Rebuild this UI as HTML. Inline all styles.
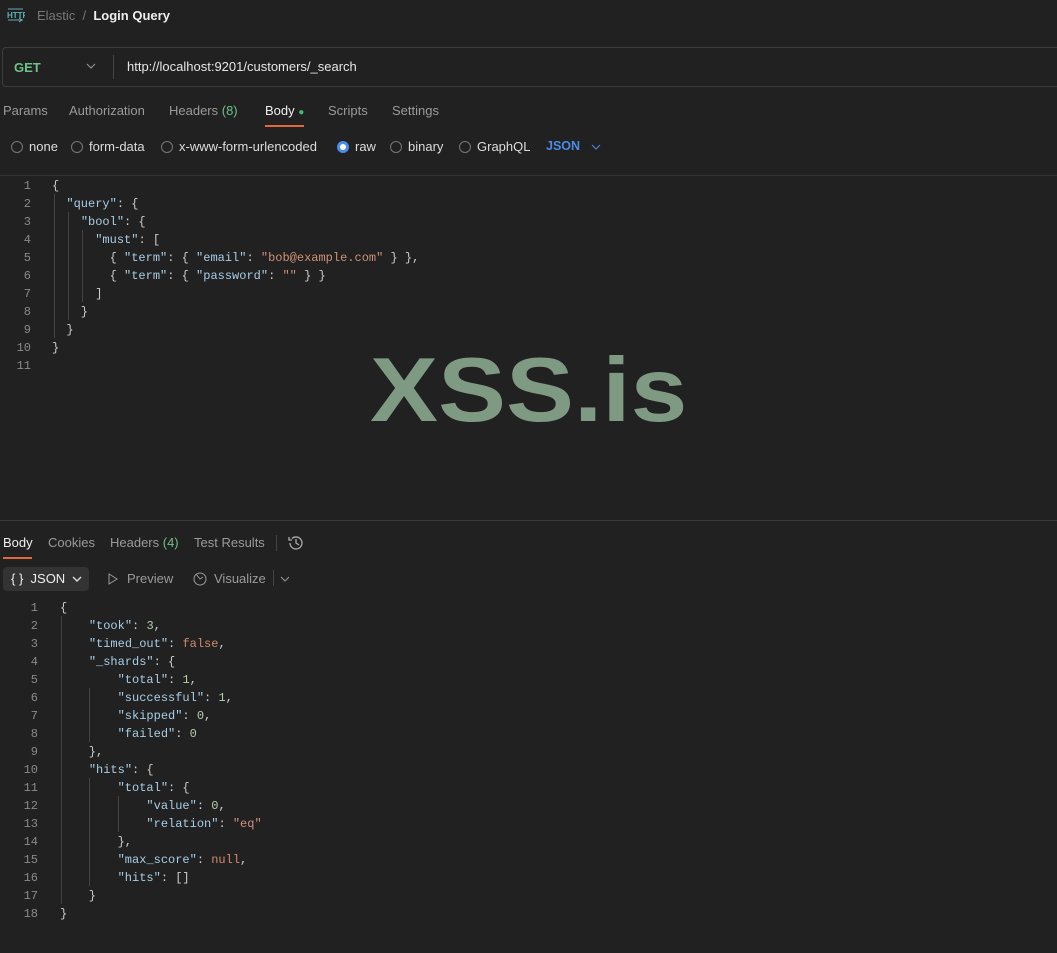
<!DOCTYPE html>
<html><head><meta charset="utf-8"><style>
body{margin:0;width:1057px;height:953px;background:#212121;font-family:"Liberation Sans",sans-serif;color:#cfcfcf;position:relative;overflow:hidden}
.a{position:absolute;white-space:pre}
.m{font-family:"Liberation Mono",monospace;font-size:12px}
.ln{color:#8a8a8a;text-align:right;width:22px}
.k{color:#a9cde6}.s{color:#ce9178}.n{color:#b5cea8}.p{color:#cccccc}.b{color:#d08a6a}
.t{font-size:13px;color:#9a9a9a}
.g{position:absolute;width:1px;background:#444}
.rb{position:absolute;top:139px;font-size:13px;color:#ddd}
.r{display:inline-block;width:12px;height:12px;border:1px solid #777;border-radius:50%;vertical-align:-2px;margin-right:6px;box-sizing:border-box}
</style></head><body>
<svg class="a" style="left:7px;top:7px" width="18" height="16" viewBox="0 0 18 16"><text x="0" y="11" font-size="8" fill="#5fb0b7" font-family="Liberation Sans" font-weight="bold">HTTP</text><path d="M1 13h15M12 11l3 2-3 2" stroke="#5fb0b7" fill="none"/><path d="M1 2h15" stroke="#5fb0b7"/></svg>
<div class="a" style="left:37px;top:8px;font-size:13px;color:#777">Elastic&nbsp; /&nbsp; <span style="color:#eee;font-weight:bold">Login Query</span></div>
<div class="a" style="left:2px;top:47px;width:1060px;height:40px;border:1px solid #3c3c3c;border-radius:4px;box-sizing:border-box"></div>
<div class="a" style="left:14px;top:60px;font-size:13px;color:#6cc08a;font-weight:bold">GET</div>
<svg class="a" style="left:86px;top:62px" width="10" height="8"><path d="M1 2l4 4 4-4" stroke="#999" fill="none"/></svg>
<div class="g" style="left:113px;top:55px;height:24px"></div>
<div class="a" style="left:127px;top:59px;font-size:13px;color:#e6e6e6">http://localhost:9201/customers/_search</div>
<div class="a t" style="left:3px;top:103px">Params</div>
<div class="a t" style="left:69px;top:103px">Authorization</div>
<div class="a t" style="left:169px;top:103px">Headers <span style="color:#6cc08a">(8)</span></div>
<div class="a t" style="left:265px;top:103px;color:#eee">Body <span style="color:#3fbf6a;font-size:10px">●</span></div>
<div class="a" style="left:265px;top:125px;width:39px;height:2px;background:#e0683c"></div>
<div class="a t" style="left:328px;top:103px">Scripts</div>
<div class="a t" style="left:392px;top:103px">Settings</div>
<div class="rb" style="left:11px"><span class="r"></span>none</div>
<div class="rb" style="left:71px"><span class="r"></span>form-data</div>
<div class="rb" style="left:161px"><span class="r"></span>x-www-form-urlencoded</div>
<div class="rb" style="left:337px"><span class="r" style="border:3px solid #4a8ce8;background:#fff"></span>raw</div>
<div class="rb" style="left:390px"><span class="r"></span>binary</div>
<div class="rb" style="left:459px"><span class="r"></span>GraphQL</div>
<div class="rb" style="left:546px;color:#4a8ce8;font-weight:bold;font-size:12.5px">JSON</div>
<svg class="a" style="left:591px;top:143px" width="10" height="8"><path d="M1 2l4 4 4-4" stroke="#4a8ce8" fill="none"/></svg>
<div class="a" style="left:0;top:175px;width:1057px;height:1px;background:#333"></div>
<div class="a m ln" style="left:9px;top:177px;line-height:18px">1
2
3
4
5
6
7
8
9
10
11</div>
<div class="g" style="left:54px;top:194px;height:144px"></div>
<div class="g" style="left:68px;top:212px;height:108px"></div>
<div class="g" style="left:82px;top:230px;height:72px"></div>
<div class="a m p" style="left:52px;top:177px;line-height:18px">{
  <span class="k">"query"</span>: {
    <span class="k">"bool"</span>: {
      <span class="k">"must"</span>: [
        { <span class="k">"term"</span>: { <span class="k">"email"</span>: <span class="s">"bob@example.com"</span> } },
        { <span class="k">"term"</span>: { <span class="k">"password"</span>: <span class="s">""</span> } }
      ]
    }
  }
}</div>
<div class="a" style="left:370px;top:339px;font-size:91px;font-weight:bold;color:#7f9a82;transform:scaleX(1.12);transform-origin:0 0">XSS.is</div>
<div class="a" style="left:0;top:520px;width:1057px;height:1px;background:#3a3a3a"></div>
<div class="a t" style="left:3px;top:535px;color:#eee">Body</div>
<div class="a" style="left:3px;top:557px;width:29px;height:2px;background:#e0683c"></div>
<div class="a t" style="left:48px;top:535px">Cookies</div>
<div class="a t" style="left:110px;top:535px">Headers <span style="color:#6cc08a">(4)</span></div>
<div class="a t" style="left:194px;top:535px">Test Results</div>
<div class="g" style="left:276px;top:535px;height:16px"></div>
<svg class="a" style="left:287px;top:534px" width="18" height="18" viewBox="0 0 18 18"><path d="M3 9a6 6 0 1 0 2-4.5M2 3v3h3M9 5v4l3 2" stroke="#aaa" fill="none" stroke-width="1.3"/></svg>
<div class="a" style="left:3px;top:567px;width:86px;height:24px;background:#333;border-radius:4px"></div>
<div class="a" style="left:11px;top:571px;font-size:13px;color:#eee">{ }&nbsp; JSON</div>
<svg class="a" style="left:72px;top:575px" width="10" height="8"><path d="M1 2l4 4 4-4" stroke="#ddd" fill="none" stroke-width="1.4"/></svg>
<svg class="a" style="left:107px;top:573px" width="12" height="12"><path d="M2 1l8 5-8 5z" stroke="#999" fill="none"/></svg>
<div class="a t" style="left:127px;top:571px">Preview</div>
<svg class="a" style="left:192px;top:570px" width="16" height="16"><circle cx="8" cy="9" r="6" stroke="#999" fill="none"/><path d="M4 4l4 5 3-2" stroke="#999" fill="none"/></svg>
<div class="a t" style="left:214px;top:571px">Visualize</div>
<div class="g" style="left:273px;top:570px;height:16px"></div>
<svg class="a" style="left:280px;top:575px" width="10" height="8"><path d="M1 2l4 4 4-4" stroke="#999" fill="none"/></svg>
<div class="a m ln" style="left:16px;top:599px;line-height:18px">1
2
3
4
5
6
7
8
9
10
11
12
13
14
15
16
17
18</div>
<div class="g" style="left:61px;top:616px;height:288px"></div>
<div class="g" style="left:89px;top:688px;height:54px"></div>
<div class="g" style="left:89px;top:778px;height:108px"></div>
<div class="g" style="left:118px;top:796px;height:36px"></div>
<div class="a m p" style="left:60px;top:599px;line-height:18px">{
    <span class="k">"took"</span>: <span class="n">3</span>,
    <span class="k">"timed_out"</span>: <span class="b">false</span>,
    <span class="k">"_shards"</span>: {
        <span class="k">"total"</span>: <span class="n">1</span>,
        <span class="k">"successful"</span>: <span class="n">1</span>,
        <span class="k">"skipped"</span>: <span class="n">0</span>,
        <span class="k">"failed"</span>: <span class="n">0</span>
    },
    <span class="k">"hits"</span>: {
        <span class="k">"total"</span>: {
            <span class="k">"value"</span>: <span class="n">0</span>,
            <span class="k">"relation"</span>: <span class="s">"eq"</span>
        },
        <span class="k">"max_score"</span>: <span class="b">null</span>,
        <span class="k">"hits"</span>: []
    }
}</div>
</body></html>
